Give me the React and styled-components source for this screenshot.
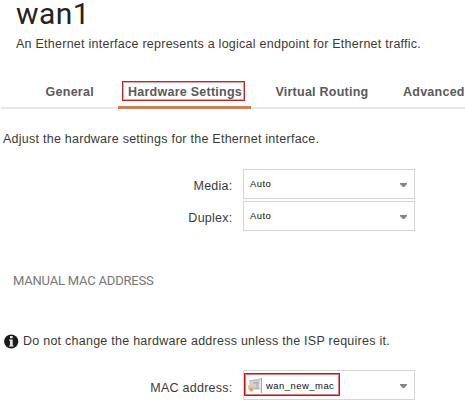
import styled, { css, createGlobalStyle } from "styled-components";

const GlobalStyle = createGlobalStyle`
  * {
    box-sizing: border-box;
  }
  body {
    margin: 0;
    background: #fff;
    overflow: hidden;
    font-family: "Liberation Sans", Arial, sans-serif;
    font-size: 12.5px;
    letter-spacing: 0.25px;
    color: #3b3a36;
  }
`;

const Page = styled.main`
  width: 465px;
  height: 408px;
  overflow: hidden;
`;
const Header = styled.header`
  height: 77px;
  padding-left: 16px;
`;
const Title = styled.h1`
  margin: 0;
  height: 34px;
  font-family: Roboto, sans-serif;
  font-size: 30px;
  font-weight: 400;
  line-height: 27px;
  letter-spacing: 0.4px;
  color: #242424;
`;
const Text = styled.p`
  margin: 0;
  line-height: 20px;
  white-space: nowrap;
`;
const Tabs = styled.nav`
  display: flex;
  width: 464px;
  height: 32px;
  margin-left: 1px;
  box-shadow: inset 0 -2px #e6e6e6;
`;
const Tab = styled.div`
  flex: none;
  width: ${(props) => props.$width};
  padding: 5px 0 0 ${(props) => props.$indent};
  font-weight: bold;
  line-height: 20px;
  white-space: nowrap;
  color: #5a5a5a;
  ${(props) =>
    props.$active &&
    css`
      padding-top: 4px;
      border-bottom: 3px solid #cb8058;
    `}
`;
const TabMark = styled.span`
  display: block;
  width: 123px;
  height: 20px;
  padding-left: 5px;
  line-height: 20px;
  border: 1px solid #b8272c;
  box-shadow: inset 0 0 0 1px #e3a4a6;
`;
const Intro = styled.section`
  height: 60px;
  padding: 20px 0 0 3px;
`;
const Row = styled.div`
  display: flex;
  height: 30px;
  margin-bottom: 2px;
`;
const Label = styled.label`
  width: 243px;
  padding: ${(props) => (props.$low ? "8px" : "7px")} 10.5px 0 0;
  line-height: 20px;
  text-align: right;
`;
const Select = styled.div`
  display: flex;
  align-items: center;
  justify-content: space-between;
  width: 172px;
  height: 30px;
  padding: 0 7px 0 ${(props) => props.$indent || "6px"};
  border: 1px solid #d6d6d6;
  font-size: 9.5px;
  letter-spacing: 0.45px;
  color: #111;
`;
const Arrow = styled.svg`
  width: 7px;
  height: 4px;
  margin-top: 2px;
`;
const SectionTitle = styled.h2`
  margin: 40px 0 0 13px;
  font-family: Roboto, sans-serif;
  font-size: 13px;
  font-weight: 400;
  line-height: 20px;
  letter-spacing: -0.2px;
  color: #777;
`;
const Notice = styled.div`
  display: flex;
  align-items: center;
  gap: 4px;
  margin: 40px 0 19px 4px;
`;
const ObjectMark = styled.div`
  display: flex;
  align-items: center;
  gap: 2px;
  width: 96px;
  height: 23px;
  margin-bottom: 1px;
  padding: 1px 0 0 2px;
  border: 1px solid #c4161c;
  box-shadow: inset 0 0 0 1px #e2787b;
`;
const Value = styled.span`
  line-height: 12px;
`;
const ObjectName = styled(Value)`
  margin-top: 2px;
`;

function DropArrow() {
  return (
    <Arrow viewBox="0 0 7 4">
      <path d="M0 0H7V1L4.3 4H2.7L0 1Z" fill="#858585" />
    </Arrow>
  );
}

function InfoIcon() {
  return (
    <svg width="15" height="15" viewBox="0 0 15 15">
      <circle cx="7.2" cy="7.5" r="7.1" fill="#1c1a1b" />
      <path d="M6 2H8.7V4.2H6Z" fill="#eee" />
      <path d="M5 5.4H8.7V11.6H9.6V12.6H5V11.6H6V6.4H5Z" fill="#e4e4e4" />
    </svg>
  );
}

function MacIcon() {
  return (
    <svg width="17" height="17" viewBox="0 0 16 16">
      <path d="M2 3L12 1.5V12H6L2 9Z" fill="#d2d2d2" />
      <path d="M2.5 3.5L12 2.5" stroke="#bbb" fill="none" />
      <path d="M6 5.5H11.5M9.5 5V10M7 10.5H12" stroke="#a8a8a8" fill="none" />
      <path d="M12.5 1H14V15H13V3Z" fill="#999" />
      <path d="M1 8L4 7L6.5 10.5L6 13.5L3.5 14L1 11Z" fill="#edc692" />
      <path d="M2.5 10L5.5 10.5L5 13.5L3 12.5Z" fill="#d69c55" />
    </svg>
  );
}

function Field({ label, low, children, indent }) {
  return (
    <Row>
      <Label $low={low}>{label}</Label>
      <Select $indent={indent}>
        {children}
        <DropArrow />
      </Select>
    </Row>
  );
}

function App() {
  return (
    <>
      <GlobalStyle />
      <Page>
        <Header>
          <Title>wan1</Title>
          <Text>
            An Ethernet interface represents a logical endpoint for Ethernet
            traffic.
          </Text>
        </Header>
        <Tabs>
          <Tab $width="117px" $indent="44.6px">
            General
          </Tab>
          <Tab $width="133px" $indent="4px" $active>
            <TabMark>Hardware Settings</TabMark>
          </Tab>
          <Tab $width="128px" $indent="24.4px">
            Virtual Routing
          </Tab>
          <Tab $width="86px" $indent="24px">
            Advanced
          </Tab>
        </Tabs>
        <Intro>
          <Text>Adjust the hardware settings for the Ethernet interface.</Text>
        </Intro>
        <Field label="Media:">
          <Value>Auto</Value>
        </Field>
        <Field label="Duplex:">
          <Value>Auto</Value>
        </Field>
        <SectionTitle>MANUAL MAC ADDRESS</SectionTitle>
        <Notice>
          <InfoIcon />
          <Text>Do not change the hardware address unless the ISP requires it.</Text>
        </Notice>
        <Field label="MAC address:" indent="0" low>
          <ObjectMark>
            <MacIcon />
            <ObjectName>wan_new_mac</ObjectName>
          </ObjectMark>
        </Field>
      </Page>
    </>
  );
}

export default App;
